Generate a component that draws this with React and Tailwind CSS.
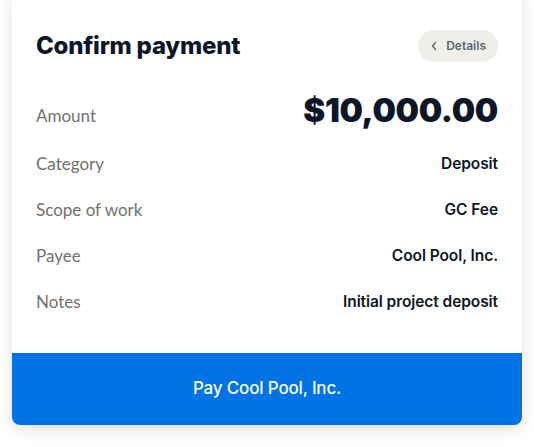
export default function App() {
  const rows = [
    ["Category", "Deposit"],
    ["Scope of work", "GC Fee"],
    ["Payee", "Cool Pool, Inc."],
    ["Notes", "Initial project deposit"],
  ]
  return (
    <div className="w-[534px] h-[447px] bg-white overflow-hidden px-3 font-['Inter',sans-serif]">
      <div className="-mt-2 pt-2 bg-white rounded-lg shadow-[0_4px_18px_rgba(0,0,0,0.12)] overflow-hidden">
        <div className="px-6">
          <div className="flex items-center justify-between h-8 mt-[30px]">
            <h1 className="text-[24px] font-extrabold tracking-[-0.01em] text-[#0b1728]">Confirm payment</h1>
            <button className="h-8 px-3 rounded-full bg-[#f0eee8] flex items-center gap-2 text-[12px] font-semibold text-[#5d6770]">
              <svg width="8" height="10" viewBox="0 0 8 10" fill="none" stroke="#5d6770" strokeWidth="1.4" strokeLinecap="round">
                <path d="M5.5 1.5 L2.5 5 L5.5 8.5" />
              </svg>
              Details
            </button>
          </div>
          <div className="flex items-baseline justify-between h-[79px] pt-[28px]">
            <span className="text-[17px] text-[#707070] font-['Lato',sans-serif]">Amount</span>
            <span className="text-[33px] leading-10 font-black tracking-[-0.01em] text-[#0b1728]">$10,000.00</span>
          </div>
          {rows.map(([label, value]) => (
            <div key={label} className="flex items-center justify-between h-[46px]">
              <span className="text-[17px] text-[#707070] font-['Lato',sans-serif]">{label}</span>
              <span className="text-[15.5px] font-semibold tracking-[-0.005em] text-[#0b1728]">{value}</span>
            </div>
          ))}
          <div className="h-7" />
        </div>
        <button className="w-full h-[72px] bg-[#0073e6] text-white text-[17px] font-medium tracking-[-0.01em] flex items-center justify-center">
          Pay Cool Pool, Inc.
        </button>
      </div>
    </div>
  )
}
